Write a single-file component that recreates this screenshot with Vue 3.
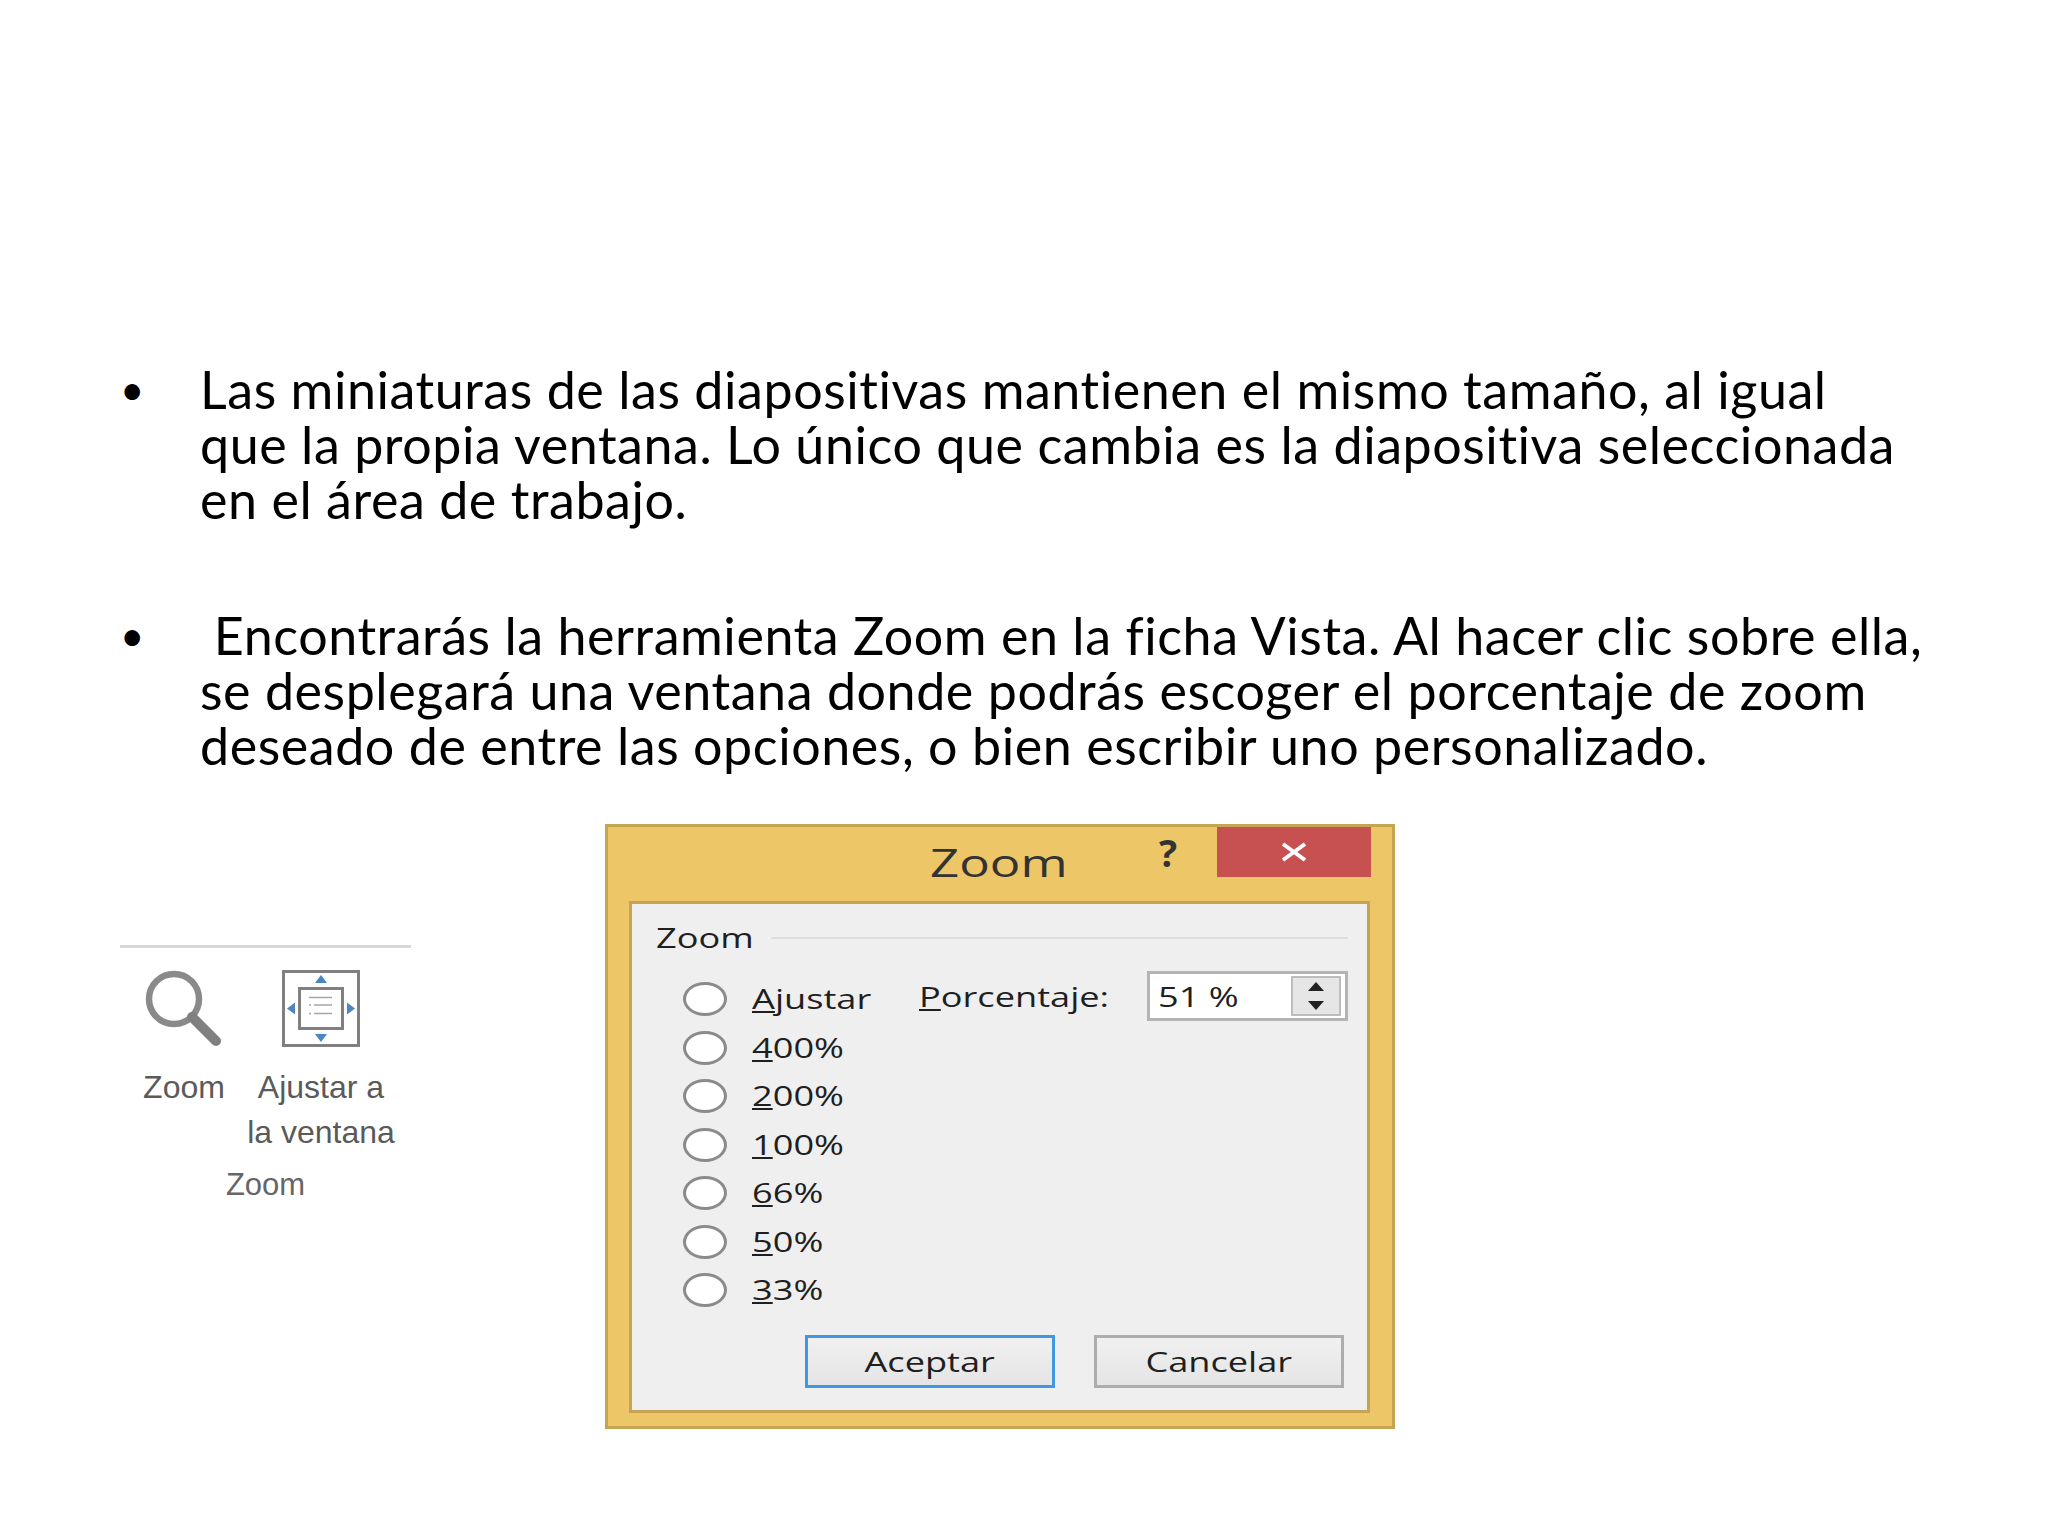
<script setup>
const paragraphs = [
  ['Las miniaturas de las diapositivas mantienen el mismo tamaño, al igual', 'que la propia ventana. Lo único que cambia es la diapositiva seleccionada', 'en el área de trabajo.'],
  ['\u00a0Encontrarás la herramienta Zoom en la ficha Vista. Al hacer clic sobre ella,', 'se desplegará una ventana donde podrás escoger el porcentaje de zoom', 'deseado de entre las opciones, o bien escribir uno personalizado.'],
]
const options = [
  { key: '4', rest: '00%' },
  { key: '2', rest: '00%' },
  { key: '1', rest: '00%' },
  { key: '6', rest: '6%' },
  { key: '5', rest: '0%' },
  { key: '3', rest: '3%' },
]
</script>

<template>
  <div class="slide">
    <ul class="bullets">
      <li v-for="(p, i) in paragraphs" :key="i" class="bullet">
        <span class="dot">•</span>
        <p class="para"><span v-for="(l, j) in p" :key="j" class="line">{{ l }}</span></p>
      </li>
    </ul>

    <div class="figures">
      <section class="ribbon">
        <div class="tools">
          <div class="tool tool-zoom">
            <svg class="icon" width="78" height="78" viewBox="0 0 78 78">
              <circle cx="29" cy="29" r="25" fill="#fff" stroke="#8a8a8a" stroke-width="6.5" />
              <path d="M47 47 L71 71" stroke="#808080" stroke-width="10" stroke-linecap="round" fill="none" />
            </svg>
            <span class="tool-text">Zoom</span>
          </div>
          <div class="tool tool-fit">
            <svg class="icon" width="78" height="78" viewBox="0 0 78 78">
              <rect x="1.500" y="1.500" width="75" height="74" fill="#fff" stroke="#808080" stroke-width="3" />
              <rect x="17.500" y="18.500" width="43" height="40" fill="#fff" stroke="#808080" stroke-width="3" />
              <path d="M27 27.500H50M32 35H50M32 43.500H50M27 35h2M27 43.500h2" stroke="#a6a6a6" stroke-width="1.500" fill="none" />
              <path d="M39 5 L45 13 H33Z M39 72 L45 64 H33Z M5 38.500 L13 32.500 V44.500Z M73 38.500 L65 32.500 V44.500Z" fill="#4a86c0" />
            </svg>
            <span class="tool-text">Ajustar a<br>la ventana</span>
          </div>
        </div>
        <div class="group-name">Zoom</div>
      </section>

      <section class="dialog">
        <header class="titlebar">
          <span class="title stretch">Zoom</span>
          <span class="help">?</span>
          <span class="close">
            <svg width="30" height="22" viewBox="0 0 30 22"><path d="M4 3 L26 19 M26 3 L4 19" stroke="#fff" stroke-width="4" /></svg>
          </span>
        </header>
        <div class="panel">
          <div class="legend"><span class="legend-text stretch">Zoom</span><span class="legend-rule"></span></div>
          <div class="body">
            <div class="options">
              <div class="option">
                <span class="radio"></span>
                <span class="label stretch"><u>A</u>justar</span>
              </div>
              <div v-for="o in options" :key="o.key" class="option">
                <span class="radio"></span>
                <span class="label stretch"><u>{{ o.key }}</u>{{ o.rest }}</span>
              </div>
            </div>
            <div class="percent">
              <span class="percent-label"><span class="label stretch"><u>P</u>orcentaje:</span></span>
              <div class="input">
                <span class="value stretch">51 %</span>
                <div class="spin">
                  <span class="spin-up"></span>
                  <span class="spin-down"></span>
                </div>
              </div>
            </div>
          </div>
          <div class="actions">
            <span class="btn btn-primary"><span class="stretch centered">Aceptar</span></span>
            <span class="btn"><span class="stretch centered">Cancelar</span></span>
          </div>
        </div>
      </section>
    </div>
  </div>
</template>

<style>
html, body { margin: 0; background: #fff; }
</style>

<style scoped>
.slide {
  width: 2048px;
  height: 1536px;
  background: #fff;
  box-sizing: border-box;
  padding-top: 362px;
  overflow: hidden;
  color: #000;
}
.bullets {
  list-style: none;
  margin: 0;
  padding: 0 0 0 120px;
  display: flex;
  flex-direction: column;
  gap: 81px;
}
.bullet { display: flex; }
.dot {
  width: 80px;
  font: 42px/55px Lato, sans-serif;
}
.para {
  margin: 0;
  font: 52px/55px Lato, sans-serif;
  letter-spacing: 0.550px;
  font-variant-ligatures: none;
  white-space: nowrap;
}
.line { display: block; }
.figures {
  display: flex;
  align-items: flex-start;
  margin-top: 51px;
  padding-left: 120px;
}
.ribbon {
  width: 291px;
  margin-top: 121px;
  border-top: 3px solid #d8d8d8;
  margin-right: 194px;
  color: #5a5a5a;
  font: 32px/45px "Liberation Sans", sans-serif;
}
.tools {
  display: flex;
  padding: 22px 0 0 17px;
}
.tool {
  display: flex;
  flex-direction: column;
  align-items: center;
}
.tool-zoom { width: 94px; }
.tool-fit { width: 148px; margin-left: 16px; }
.icon { margin-bottom: 17px; }
.tool-text {
  text-align: center;
  white-space: nowrap;
}
.group-name {
  text-align: center;
  font-size: 31px;
  line-height: 40px;
  margin-top: 10px;
  color: #666;
}
.dialog {
  width: 790px;
  height: 605px;
  box-sizing: border-box;
  background: #edc767;
  border: 3px solid #c6a552;
  display: flex;
  flex-direction: column;
  padding: 0 22px 13px 21px;
  font-family: "Open Sans", sans-serif;
  color: #1f1f1f;
}
.stretch {
  display: inline-block;
  transform: scaleX(1.34);
  transform-origin: left center;
}
.centered { transform-origin: center; }
.titlebar {
  height: 74px;
  flex: none;
  display: flex;
  position: relative;
}
.title {
  position: absolute;
  left: 301px;
  top: 11px;
  font-size: 38px;
  line-height: 48px;
  color: #333;
}
.help {
  position: absolute;
  left: 530px;
  top: 5px;
  font-size: 38px;
  line-height: 40px;
  font-weight: 700;
  color: #333;
}
.close {
  position: absolute;
  right: -1px;
  top: 0;
  width: 154px;
  height: 50px;
  background: #c65150;
  display: flex;
  align-items: center;
  justify-content: center;
}
.panel {
  flex: 1;
  background: #efeff0;
  border: 3px solid #c6a552;
  padding: 16px 19px 22px 24px;
  display: flex;
  flex-direction: column;
}
.legend {
  display: flex;
  align-items: center;
  gap: 42px;
  height: 36px;
}
.legend-text { font-size: 27px; line-height: 36px; }
.legend-rule { flex: 1; height: 2px; background: #dedede; }
.body {
  display: flex;
  margin-top: 26px;
  flex: 1;
}
.options {
  display: flex;
  flex-direction: column;
  gap: 14.500px;
  padding-left: 27px;
  width: 263px;
}
.option {
  display: flex;
  align-items: center;
  gap: 25px;
  height: 34px;
}
.radio {
  width: 44px;
  height: 34px;
  box-sizing: border-box;
  flex: none;
  border-radius: 50%;
  border: 3px solid #8b8b8b;
  background: #fff;
}
.label {
  font-size: 27px;
  line-height: 34px;
  white-space: nowrap;
}
.percent {
  display: flex;
  align-items: flex-start;
  flex: 1;
}
.percent-label { margin-top: -2px; width: 228px; }
.input {
  width: 201px;
  height: 50px;
  margin-top: -11px;
  box-sizing: border-box;
  border: 3px solid #b4b4b4;
  background: #fff;
  display: flex;
  align-items: center;
  justify-content: space-between;
  padding: 2px 4px 2px 8px;
  font-size: 27px;
}
.spin {
  width: 50px;
  height: 100%;
  box-sizing: border-box;
  background: #e6e6e6;
  border: 2px solid #bdbdbd;
  display: flex;
  flex-direction: column;
  align-items: center;
  justify-content: space-between;
  padding: 4px 0;
}
.spin-up, .spin-down {
  width: 0;
  height: 0;
  border-left: 8px solid transparent;
  border-right: 8px solid transparent;
}
.spin-up { border-bottom: 9px solid #222; }
.spin-down { border-top: 9px solid #222; }
.actions {
  display: flex;
  justify-content: flex-end;
  gap: 39px;
  padding-right: 4px;
}
.btn {
  width: 250px;
  height: 53px;
  box-sizing: border-box;
  border: 3px solid #adadad;
  background: linear-gradient(#f0f0f0, #e5e5e5);
  display: flex;
  align-items: center;
  justify-content: center;
  font-size: 27px;
}
.btn-primary { border-color: #3e98e4; }
</style>
